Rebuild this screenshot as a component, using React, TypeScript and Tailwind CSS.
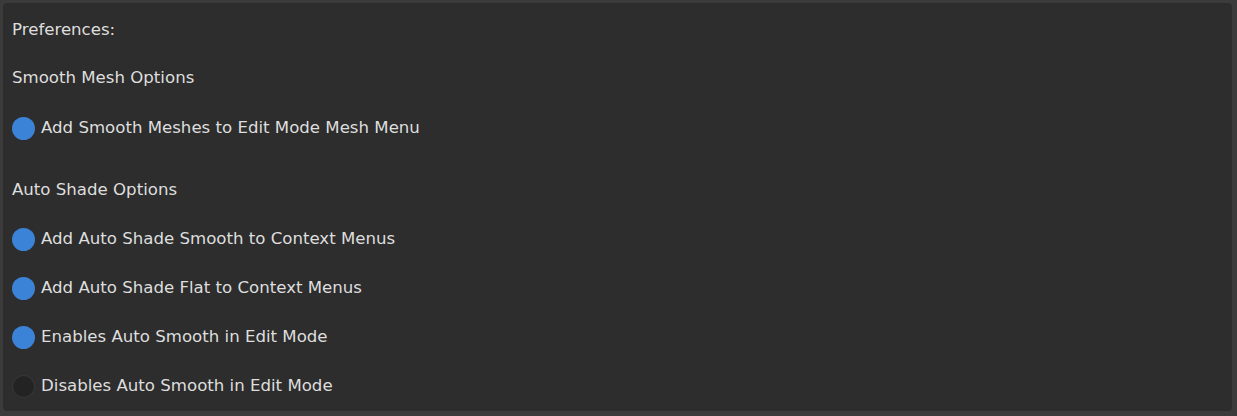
import React from "react";

function Radio({ on }: { on: boolean }) {
  return on ? (
    <span className="w-[23px] h-[23px] rounded-full bg-[#3b83d6] shrink-0" />
  ) : (
    <span className="w-[23px] h-[23px] rounded-full bg-[#232323] border border-[#3a3a3a] shrink-0" />
  );
}

function Row({ on, label, h }: { on: boolean; label: string; h: string }) {
  return (
    <div className={`flex items-center gap-[6px] ${h}`}>
      <Radio on={on} />
      <span>{label}</span>
    </div>
  );
}

export default function App() {
  return (
    <div className="w-[1237px] h-[416px] bg-[#3b3b3b] p-[3px] pr-[5px] pb-[5px]" style={{ fontFamily: '"DejaVu Sans", sans-serif' }}>
      <div className="h-full rounded-[4px] bg-[#2d2d2d] pl-[9px] pt-[3px] text-[16.6px] text-[#dedede]">
        <div className="h-[48px] flex items-center">Preferences:</div>
        <div className="h-[48px] flex items-center">Smooth Mesh Options</div>
        <Row on h="h-[52px]" label="Add Smooth Meshes to Edit Mode Mesh Menu" />
        <div className="h-[11px]" />
        <div className="h-[50px] flex items-center">Auto Shade Options</div>
        <Row on h="h-[49px]" label="Add Auto Shade Smooth to Context Menus" />
        <Row on h="h-[49px]" label="Add Auto Shade Flat to Context Menus" />
        <Row on h="h-[49px]" label="Enables Auto Smooth in Edit Mode" />
        <Row on={false} h="h-[49px]" label="Disables Auto Smooth in Edit Mode" />
      </div>
    </div>
  );
}
